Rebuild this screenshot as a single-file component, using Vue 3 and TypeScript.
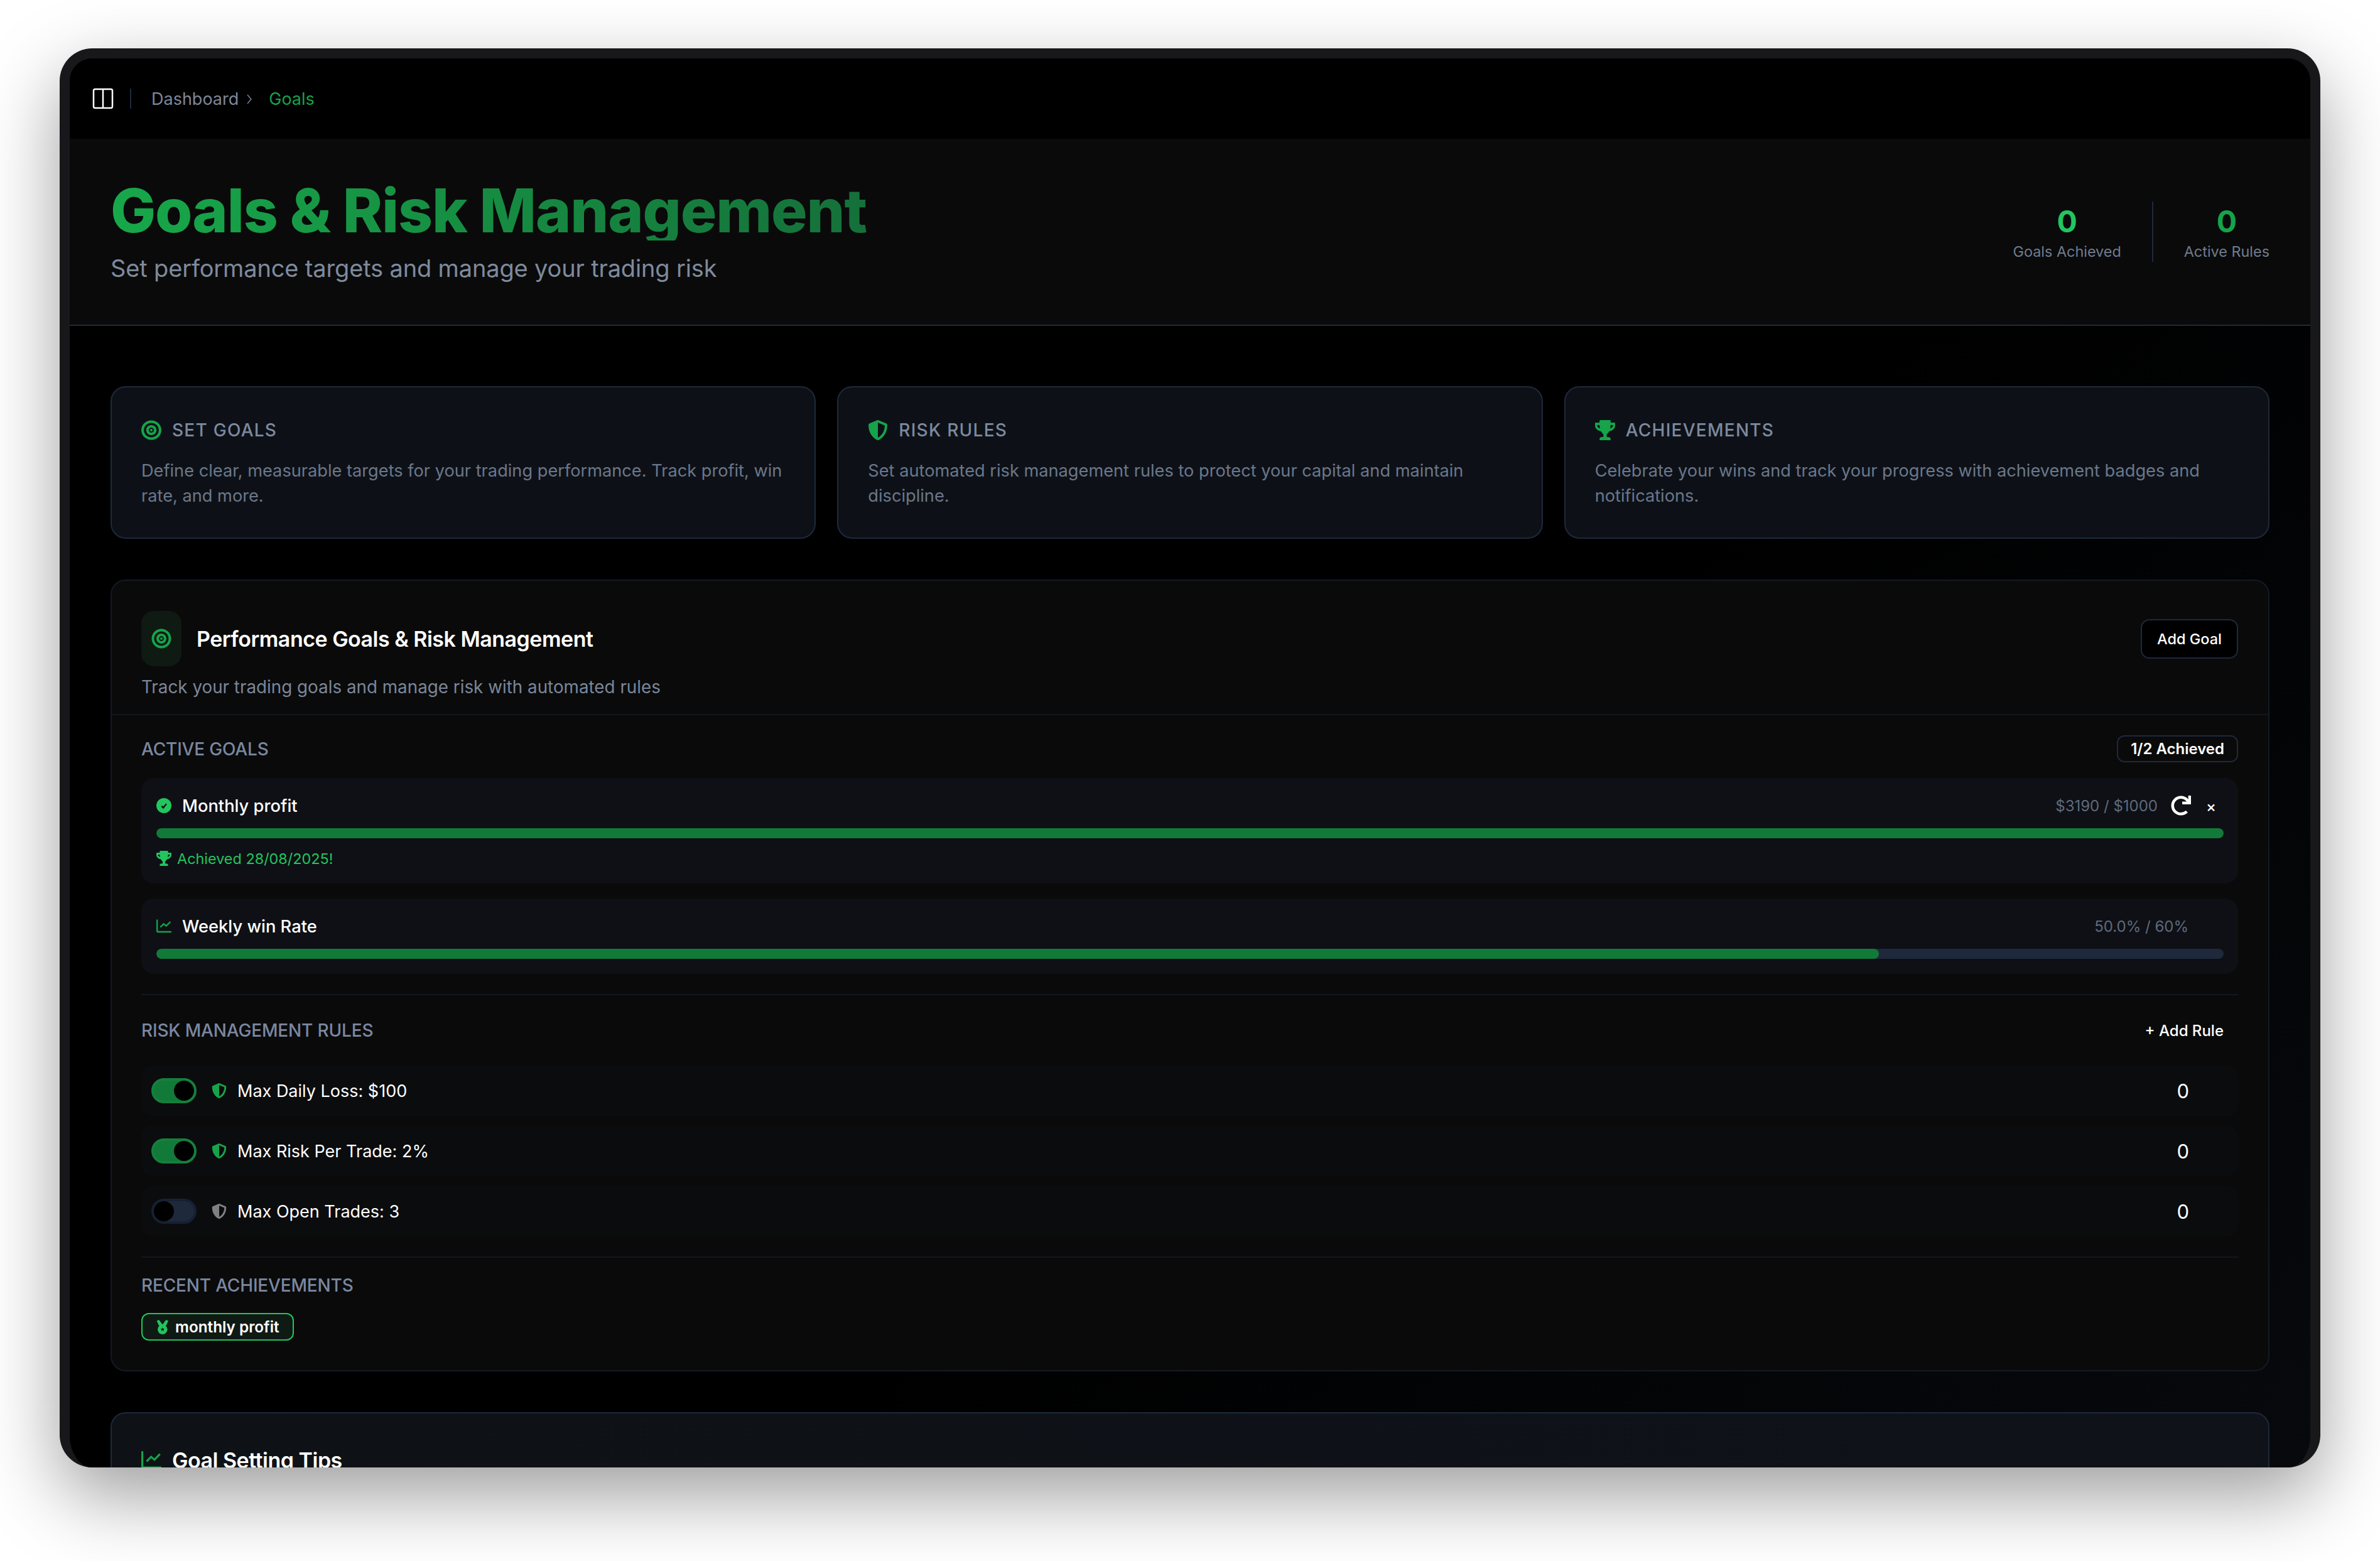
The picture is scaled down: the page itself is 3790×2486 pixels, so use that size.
<script setup lang="ts">
const P = {
  bullseye: { vb: '0 0 496 512', d: 'M248 8C111.03 8 0 119.03 0 256s111.03 248 248 248 248-111.03 248-248S384.97 8 248 8zm0 432c-101.69 0-184-82.29-184-184 0-101.69 82.29-184 184-184 101.69 0 184 82.29 184 184 0 101.69-82.29 184-184 184zm0-312c-70.69 0-128 57.31-128 128s57.31 128 128 128 128-57.31 128-128-57.31-128-128-128zm0 192c-35.38 0-64-28.62-64-64 0-35.38 28.62-64 64-64 35.38 0 64 28.62 64 64 0 35.38-28.62 64-64 64zm0-96c-17.67 0-32 14.33-32 32s14.33 32 32 32 32-14.33 32-32-14.33-32-32-32z' },
  shield: { vb: '0 0 512 512', d: 'M466.5 83.7l-192-80a48.15 48.15 0 0 0-36.9 0l-192 80C27.7 91.1 16 108.6 16 128c0 198.5 114.5 335.7 221.5 380.3 11.8 4.9 25.1 4.9 36.9 0C360.1 472.6 496 349.3 496 128c0-19.4-11.7-36.9-29.5-44.3zM256.1 446.3l-.1-381 175.9 73.3c-3.3 151.4-82.1 261.1-175.8 307.7z' },
  trophy: { vb: '0 0 576 512', d: 'M552 64H448V24c0-13.3-10.7-24-24-24H152c-13.3 0-24 10.7-24 24v40H24C10.7 64 0 74.7 0 88v56c0 35.7 22.5 72.4 61.9 100.7 31.5 22.7 69.8 37.1 110 41.7C203.3 338.5 240 360 240 360v72h-48c-35.3 0-64 20.7-64 56v12c0 6.6 5.4 12 12 12h296c6.6 0 12-5.4 12-12v-12c0-35.3-28.7-56-64-56h-48v-72s36.7-21.5 68.1-73.6c40.3-4.6 78.6-19 110-41.7 39.3-28.3 61.9-65 61.9-100.7V88c0-13.3-10.7-24-24-24zM99.3 192.8C74.9 175.2 64 155.6 64 144v-16h64.2c1 32.6 5.8 61.2 12.8 86.2-15.1-5.2-29.2-12.4-41.7-21.4zM512 144c0 16.1-17.7 36.1-35.3 48.8-12.5 9-26.7 16.2-41.8 21.4 7-25 11.8-53.6 12.8-86.2H512v16z' },
  redo: { vb: '0 0 512 512', d: 'M500.33 0h-47.41a12 12 0 0 0-12 12.57l4 82.76A247.42 247.42 0 0 0 256 8C119.34 8 8.19 119.53 8 256.19 7.81 393.07 118.75 504 256 504a247.1 247.1 0 0 0 166.18-63.91 12 12 0 0 0 .48-17.43l-34-34a12 12 0 0 0-16.38-.55A176 176 0 1 1 402.1 157.8l-101.53-4.87a12 12 0 0 0-12.57 12v47.41a12 12 0 0 0 12 12h200.33a12 12 0 0 0 12-12V12a12 12 0 0 0-12-12z' },
}

const cards = [
  { icon: P.bullseye, title: 'SET GOALS', text: 'Define clear, measurable targets for your trading performance. Track profit, win rate, and more.' },
  { icon: P.shield, title: 'RISK RULES', text: 'Set automated risk management rules to protect your capital and maintain discipline.' },
  { icon: P.trophy, title: 'ACHIEVEMENTS', text: 'Celebrate your wins and track your progress with achievement badges and notifications.' },
]
const rules = [
  { label: 'Max Daily Loss: $100', on: true, count: 0 },
  { label: 'Max Risk Per Trade: 2%', on: true, count: 0 },
  { label: 'Max Open Trades: 3', on: false, count: 0 },
]
</script>

<template>
  <div class="page">
    <div class="window">
      <div class="topbar">
        <svg class="panel-icon" viewBox="0 0 24 24" fill="none" stroke="#fff" stroke-width="1.5" stroke-linejoin="round">
          <rect x="3" y="3" width="18" height="18" rx="1.5" /><path d="M12 3v18" />
        </svg>
        <span class="top-divider"></span>
        <span class="crumb">Dashboard</span>
        <svg class="chev" viewBox="0 0 8 16" fill="none" stroke="#7c879b" stroke-width="1.4"><path d="M1 1l6 7-6 7" /></svg>
        <span class="crumb crumb-active">Goals</span>
      </div>

      <header class="head">
        <div class="head-left">
          <h1 class="title">Goals &amp; Risk Management</h1>
          <p class="subtitle">Set performance targets and manage your trading risk</p>
        </div>
        <div class="stats">
          <div class="stat">
            <div class="num num-a">0</div>
            <div class="lbl">Goals Achieved</div>
          </div>
          <span class="stat-div"></span>
          <div class="stat">
            <div class="num num-b">0</div>
            <div class="lbl">Active Rules</div>
          </div>
        </div>
      </header>

      <main class="main">
        <section class="cards">
          <article v-for="c in cards" :key="c.title" class="card">
            <div class="card-head">
              <svg class="i32 green2" :viewBox="c.icon.vb" preserveAspectRatio="none"><path :d="c.icon.d" /></svg>
              <h3 class="card-title">{{ c.title }}</h3>
            </div>
            <p class="card-text">{{ c.text }}</p>
          </article>
        </section>

        <section class="panel">
          <div class="panel-head">
            <div class="panel-row">
              <div class="panel-ico">
                <svg class="i32 green2" :viewBox="P.bullseye.vb"><path :d="P.bullseye.d" /></svg>
              </div>
              <h2 class="panel-title">Performance Goals &amp; Risk Management</h2>
              <button class="btn">Add Goal</button>
            </div>
            <p class="panel-sub">Track your trading goals and manage risk with automated rules</p>
          </div>

          <div class="panel-body">
            <div class="sec-row sec-goals">
              <h4 class="sec-title">ACTIVE GOALS</h4>
              <span class="badge">1/2 Achieved</span>
            </div>

            <div class="goals">
              <div class="goal">
                <div class="goal-row">
                  <svg class="i24" viewBox="0 0 24 24"><circle cx="12" cy="12" r="12" fill="#22c55e" /><path d="M8.4 12.6l2.6 2.8 5-6.2" fill="none" stroke="#0c1016" stroke-width="2.3" /></svg>
                  <span class="goal-name">Monthly profit</span>
                  <span class="goal-val">$3190 / $1000</span>
                  <svg class="redo" :viewBox="P.redo.vb"><path :d="P.redo.d" /></svg>
                  <span class="close">×</span>
                </div>
                <div class="bar"><div class="fill" :style="{ width: '100%' }"></div></div>
                <div class="achieved">
                  <svg class="i24 green1" :viewBox="P.trophy.vb" preserveAspectRatio="none"><path :d="P.trophy.d" /></svg>
                  <span>Achieved 28/08/2025!</span>
                </div>
              </div>
              <div class="goal">
                <div class="goal-row">
                  <svg class="i24" viewBox="0 0 24 24" fill="none" stroke="#16a34a" stroke-width="2.4">
                    <path d="M1.2 2.5V20a1 1 0 0 0 1 1H23" stroke-linecap="round" /><path d="M6.3 13.7l5.4-5.4 4 3.4 6.6-6.7" />
                  </svg>
                  <span class="goal-name">Weekly win Rate</span>
                  <span class="goal-val goal-val-plain">50.0% / 60%</span>
                </div>
                <div class="bar"><div class="fill" :style="{ width: '83.33%' }"></div></div>
              </div>
            </div>

            <div class="sep"></div>

            <div class="sec-row sec-rules">
              <h4 class="sec-title">RISK MANAGEMENT RULES</h4>
              <span class="add-rule">+ Add Rule</span>
            </div>

            <div class="rules">
              <div v-for="r in rules" :key="r.label" class="rule">
                <span class="toggle" :class="{ on: r.on }"><span class="knob"></span></span>
                <svg class="i24 shield" :class="r.on ? 'green2' : 'grey'" :viewBox="P.shield.vb"><path :d="P.shield.d" /></svg>
                <span class="rule-label">{{ r.label }}</span>
                <span class="rule-count">{{ r.count }}</span>
              </div>
            </div>

            <div class="sep sep-tight"></div>

            <h4 class="sec-title recent">RECENT ACHIEVEMENTS</h4>
            <div class="medal-badge">
              <svg class="medal" viewBox="0 0 20 24">
                <path d="M.6 2.5L4.2 1l5.6 7.5L15.4 1 19 2.5 15.5 10H4z" fill="#22c55e" />
                <circle cx="9.8" cy="16.3" r="7.7" fill="#22c55e" />
                <path d="M9.8 12.8l.82 2.27 2.41.08-1.9 1.48.67 2.32-2-1.35-2 1.35.67-2.32-1.9-1.48 2.41-.08z" fill="#0f1a14" />
              </svg>
              <span>monthly profit</span>
            </div>
          </div>
        </section>

        <section class="tips">
          <div class="tips-head">
            <svg class="i32" viewBox="0 0 24 24" fill="none" stroke="#16a34a" stroke-width="2.4">
              <path d="M1.2 2.5V20a1 1 0 0 0 1 1H23" stroke-linecap="round" /><path d="M6.3 13.7l5.4-5.4 4 3.4 6.6-6.7" />
            </svg>
            <h3 class="tips-title">Goal Setting Tips</h3>
          </div>
        </section>
      </main>
    </div>
  </div>
</template>

<style>
html, body { margin: 0; background: #fff; overflow: hidden; }
</style>

<style scoped>
* { box-sizing: border-box; }
.page {
  width: 3790px; height: 2486px; padding: 77px 0 0 95px; background: #fff; overflow: hidden;
  font-family: Inter, "Liberation Sans", sans-serif; color: #fff;
}
h1, h2, h3, h4, p { margin: 0; font: inherit; }
.window {
  width: 3600px; height: 2260px; border: 16px solid #18181b; border-bottom: 0; border-radius: 52px;
  overflow: hidden; background: #000; box-shadow: 0 44px 120px rgba(0, 0, 0, .39);
  display: flex; flex-direction: column;
}
.topbar { flex: none; height: 128px; display: flex; align-items: center; padding-left: 33px; background: #000; }
.panel-icon { width: 40px; height: 40px; flex: none; }
.top-divider { width: 2px; height: 32px; background: #1e293b; margin: 0 32px 0 23px; }
.crumb { font-size: 27px; color: #7c879b; }
.crumb-active { color: #16a34a; }
.chev { width: 8px; height: 16px; margin: 2px 27px 0 13px; flex: none; }

.head {
  flex: none; height: 298px; display: flex; align-items: center; justify-content: space-between;
  padding: 0 65px; background: #0a0a0a; border-bottom: 2px solid #1e293b;
}
.head-left { margin-bottom: 4px; }
.title {
  font-size: 96px; line-height: 96px; font-weight: 800; letter-spacing: -.012em; width: max-content;
  background: linear-gradient(90deg, #17a84a, #15703a); -webkit-background-clip: text; background-clip: text; color: transparent;
}
.subtitle { font-size: 38px; line-height: 40px; margin-top: 24px; letter-spacing: -.004em; color: #7e8a9e; }
.stats { display: flex; gap: 49px; align-items: stretch; }
.stat { text-align: center; }
.num { font-size: 48px; line-height: 64px; font-weight: 700; }
.num-a { color: #22c55e; }
.num-b { color: #16a34a; }
.lbl { font-size: 23.4px; line-height: 32px; color: #6f7b90; }
.stat-div { width: 2px; background: #1e293b; }

.main {
  flex: 1; min-height: 0; display: flex; flex-direction: column; gap: 65px; padding: 96px 65px 0;
  background: linear-gradient(135deg, #000 55%, #07090d);
}
.cards { flex: none; display: grid; grid-template-columns: repeat(3, 1fr); gap: 34px; }
.card {
  height: 243px; padding: 48px 46px 46px 47px; background: #0d1117; border: 2px solid #1e293b; border-radius: 24px;
}
.card-head { display: flex; align-items: center; gap: 17px; height: 40px; margin-bottom: 25px; }
.i32 { width: 32px; height: 32px; flex: none; }
.i24 { width: 24px; height: 24px; flex: none; }
.green1 { fill: #22c55e; }
.green2 { fill: #16a34a; }
.grey { fill: #808080; }
.card-title { font-size: 28px; font-weight: 500; letter-spacing: .045em; color: #7d899e; }
.card-text { font-size: 27.2px; line-height: 40px; color: #6b778b; }

.panel { flex: none; background: #0a0a0a; border: 2px solid #141a24; border-radius: 24px; }
.panel-head { padding: 48px 48px 23px 47px; border-bottom: 2px solid #11161f; }
.panel-row { display: flex; align-items: center; height: 88px; }
.panel-ico {
  width: 64px; height: 88px; border-radius: 20px; background: #0f1a12; display: flex; align-items: center; justify-content: center; flex: none;
}
.panel-title { flex: 1; margin-left: 24px; font-size: 34px; font-weight: 600; letter-spacing: -.015em; }
.btn {
  width: 155px; height: 63px; border: 2px solid #1e293b; border-radius: 14px; background: #000; color: #fff;
  font: 500 23.5px Inter, sans-serif; padding: 0;
}
.panel-sub { margin-top: 13px; font-size: 27.8px; line-height: 40px; color: #7a869a; }
.panel-body { padding: 32px 48px 47px 47px; }
.sec-row { display: flex; align-items: center; justify-content: space-between; }
.sec-goals { height: 43px; margin-bottom: 25px; }
.sec-rules { height: 48px; margin-bottom: 32px; padding-right: 23px; }
.sec-title { font-size: 28px; line-height: 40px; font-weight: 500; letter-spacing: -.006em; color: #7a87a0; }
.badge {
  height: 43px; padding: 0 20px; border: 2px solid #1e293b; border-radius: 12px; display: flex; align-items: center;
  font-size: 24px; font-weight: 600;
}
.goals { display: flex; flex-direction: column; gap: 24px; }
.goal { padding: 24px 23px 24px 24px; background: #0e1015; border-radius: 20px; }
.goal-row { display: flex; align-items: center; height: 40px; }
.goal-name { flex: 1; min-width: 0; margin-left: 17px; font-size: 27.3px; font-weight: 500; }
.goal-val { font-size: 24px; color: #5f6a7d; }
.goal-val-plain { margin-right: 56px; }
.redo { width: 32px; height: 32px; fill: #fff; margin-left: 21px; flex: none; }
.close { width: 32px; margin: 4px 4px 0 16px; text-align: center; font-size: 24px; line-height: 32px; font-weight: 500; }
.bar { height: 16px; margin-top: 16px; border-radius: 8px; background: #1e293b; overflow: hidden; }
.fill { height: 100%; border-radius: 8px; background: #127a39; }
.achieved { display: flex; align-items: center; gap: 9px; height: 32px; margin-top: 16px; font-size: 23.4px; color: #22c55e; }
.sep { height: 2px; margin: 32px 0; background: #11161f; }
.sep-tight { margin-bottom: 24px; }
.add-rule { font-size: 24px; font-weight: 500; }
.rules { display: flex; flex-direction: column; gap: 16px; }
.rule { display: flex; align-items: center; height: 80px; padding: 0 78px 0 16px; background: #0b0c0e; border-radius: 16px; }
.toggle {
  width: 72px; height: 40px; border-radius: 20px; border: 4px solid #172033; background: #1e293b; display: flex; flex: none;
}
.toggle.on { background: #127a39; border-color: #15803d; justify-content: flex-end; }
.knob { width: 32px; height: 32px; border-radius: 50%; background: #000; }
.shield { margin-left: 24px; }
.rule-label { flex: 1; margin-left: 17px; font-size: 27px; }
.rule-count { font-size: 31px; }
.recent { margin: 0 0 24px; }
.medal-badge {
  display: flex; align-items: center; gap: 10px; width: 243px; height: 44px; padding: 0 20px 0 22px; background: #0f1a14;
  border: 2px solid #22c55e; border-radius: 12px; font-size: 24.3px; font-weight: 600;
}
.medal { width: 20px; height: 24px; flex: none; }
.tips {
  flex: none; height: 300px; padding: 50px 47px; background: linear-gradient(90deg, #0e1216, #0f1219); border: 2px solid #1e293b; border-radius: 24px;
}
.tips-head { display: flex; align-items: center; gap: 17px; height: 48px; }
.tips-title { font-size: 34px; font-weight: 600; letter-spacing: -.015em; }
</style>
